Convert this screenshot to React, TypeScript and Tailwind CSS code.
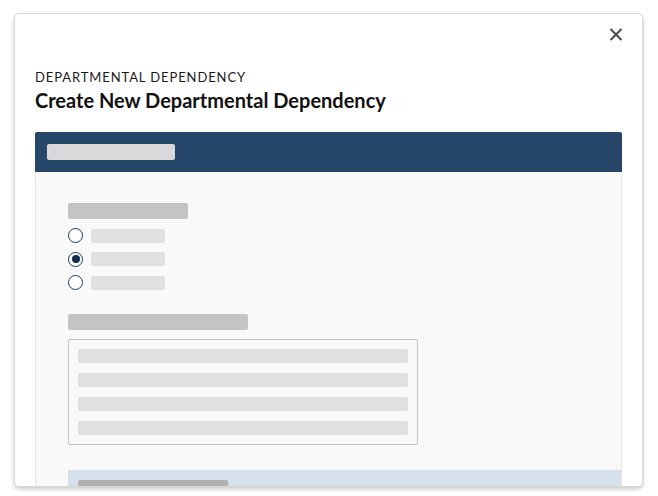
import React from "react";

export default function App() {
  const radios = [false, true, false];
  return (
    <div className="w-[658px] h-[496px] bg-white relative" style={{ fontFamily: "Lato, 'Noto Sans', sans-serif" }}>
      <div className="absolute left-[14px] top-[13px] w-[629px] h-[474px] bg-white border border-[#d9d9d9] rounded-[5px] shadow-[0_2px_4px_rgba(0,0,0,0.22)] overflow-hidden">
        <button className="absolute right-[19px] top-[14px] w-[14px] h-[13px] flex items-center justify-center">
          <svg width="14" height="13" viewBox="0 0 14 13">
            <path d="M1.5 1 L12.5 12 M12.5 1 L1.5 12" stroke="#4a4a4a" strokeWidth="2" strokeLinecap="butt" />
          </svg>
        </button>
        <div className="px-5 pt-[55px]">
          <div className="text-[13px] leading-[16px] tracking-[0.9px] text-[#1a1a1a]">DEPARTMENTAL DEPENDENCY</div>
          <div className="mt-[4px] text-[20px] leading-[22px] font-bold text-[#111]">Create New Departmental Dependency</div>
          <div className="mt-[21px]">
            <div className="h-[40px] bg-[#26466a] rounded-t-[2px] pl-3 pt-3">
              <div className="w-[128px] h-[16px] bg-[#d9d9d9] rounded-[2px]" />
            </div>
            <div className="bg-[#f9f9f9] border-x border-[#e6e6e6] pl-[32px] pt-[31px] h-[400px]">
              <div className="w-[120px] h-[16px] bg-[#c4c4c4] rounded-[2px]" />
              <div className="mt-[9px] flex flex-col gap-[8.5px]">
                {radios.map((c, i) => (
                  <div key={i} className="flex items-center gap-2 h-[15px]">
                    <div className="w-[15px] h-[15px] rounded-full border-[1.5px] border-[#1e3b5c] bg-white flex items-center justify-center">
                      {c && <div className="w-[8px] h-[8px] rounded-full bg-[#0f2d4e]" />}
                    </div>
                    <div className="w-[74px] h-[14px] bg-[#e0e0e0] rounded-[2px]" />
                  </div>
                ))}
              </div>
              <div className="mt-[24px] w-[180px] h-[16px] bg-[#c4c4c4] rounded-[2px]" />
              <div className="mt-[9px] w-[350px] border border-[#c2c2c2] rounded-[2px] p-[9px] flex flex-col gap-[10px]">
                {[0, 1, 2, 3].map((i) => (
                  <div key={i} className="h-[14px] bg-[#e0e0e0] rounded-[2px]" />
                ))}
              </div>
              <div className="mt-[25px] bg-[#d6e0ea] h-[60px] pl-[10px] pt-[10px]">
                <div className="w-[150px] h-[14px] bg-[#b0b0b0] rounded-[2px]" />
              </div>
            </div>
          </div>
        </div>
      </div>
    </div>
  );
}
